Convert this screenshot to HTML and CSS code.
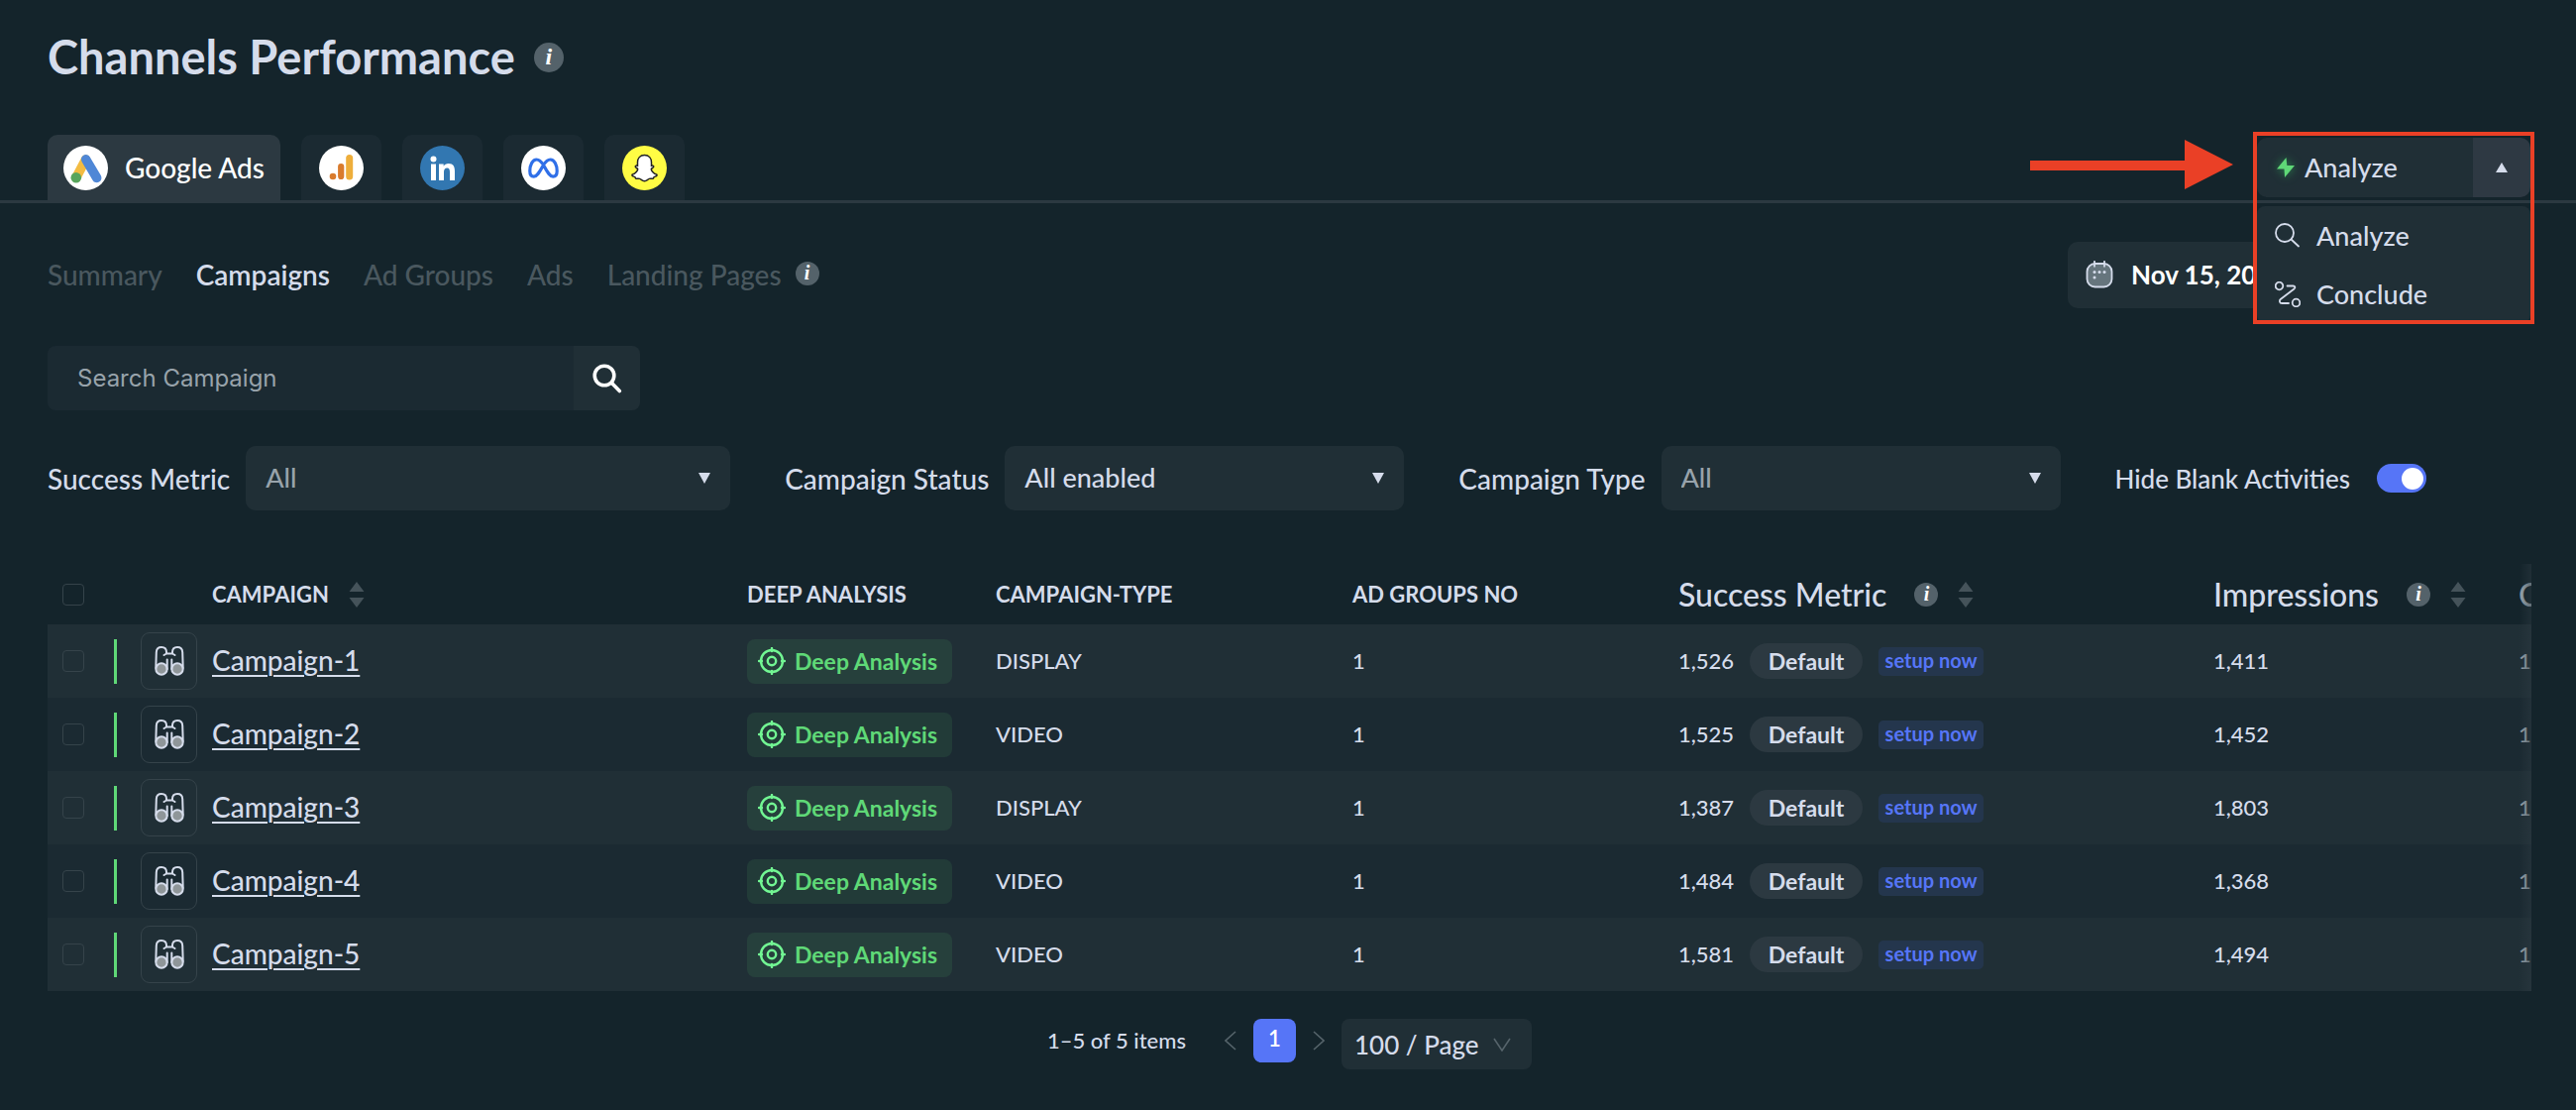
FILE: index.html
```html
<!DOCTYPE html>
<html lang="en">
<head>
<meta charset="utf-8">
<meta name="viewport" content="width=device-width, initial-scale=1">
<title>Channels Performance</title>
<link rel="stylesheet" href="styles.css">
</head>
<body>
<svg class="sprite" aria-hidden="true">
  <symbol id="i-binoculars" viewBox="0 0 30 30">
    <g fill="none" stroke="#d5dceb" stroke-width="2" stroke-linecap="round" stroke-linejoin="round">
      <circle cx="7" cy="23" r="5.700" fill="#8f9699"/>
      <circle cx="23" cy="23" r="5.700" fill="#8f9699"/>
      <path d="M1.300 22 1.800 6C2 2.500 4.300 1 7 1c3.200 0 5 2 5 5v1.500h6V6c0-3 1.800-5 5-5 2.700 0 5 1.500 5.200 5l.5 16M12.700 13.500V23M17.300 13.500V23M12 7.500 9.500 9M18 7.500 20.500 9"/>
    </g>
  </symbol>
  <symbol id="i-target" viewBox="0 0 28 28">
    <g fill="none" stroke="#72f693" stroke-width="2.400" stroke-linecap="round">
      <circle cx="14" cy="14" r="11"/><circle cx="14" cy="14" r="4.200"/>
      <path d="M14 1v3M14 24v3M1 14h3M24 14h3"/>
    </g>
  </symbol>
  <symbol id="i-sort" viewBox="0 0 16 26">
    <path d="M8 0 15.500 10H.5zM8 26 .5 16h15z" fill="#45535a"/>
  </symbol>
  <symbol id="i-down" viewBox="0 0 12 11"><path d="M0 0h12L6 11z" fill="#d5dceb"/></symbol>
</svg>

<header class="page-head">
  <h1>Channels Performance</h1>
  <span class="info info-lg">i</span>
</header>

<div class="channel-bar">
  <nav class="channels">
    <button class="channel active" type="button">
      <svg class="logo" viewBox="0 0 45 45" aria-hidden="true"><circle cx="22.500" cy="22.500" r="22.500" fill="#fff"/><path d="M22.500 14 13 32" stroke="#f3bc42" stroke-width="9.500" stroke-linecap="round"/><path d="M22.700 13.800 33.700 32.500" stroke="#4f87d6" stroke-width="9.500" stroke-linecap="round"/><circle cx="12.800" cy="32.300" r="5.300" fill="#58a55c"/></svg>
      Google Ads
    </button>
    <button class="channel" type="button" aria-label="Google Analytics">
      <svg class="logo" viewBox="0 0 45 45"><circle cx="22.500" cy="22.500" r="22.500" fill="#fff"/><path d="M30.700 12.500v18.500" stroke="#eeae3b" stroke-width="7" stroke-linecap="round"/><path d="M22.200 21.200v9.800" stroke="#d97b2d" stroke-width="6.200" stroke-linecap="round"/><circle cx="14" cy="31" r="3.300" fill="#d97b2d"/></svg>
    </button>
    <button class="channel" type="button" aria-label="LinkedIn">
      <svg class="logo" viewBox="0 0 45 45"><circle cx="22.500" cy="22.500" r="22.500" fill="#3277b1"/><g fill="#fff"><circle cx="13.500" cy="13.500" r="3"/><path d="M11 18.500h5V35h-5zM19 18.500h4.700v2.300c1-1.700 2.800-2.700 5-2.700 4.800 0 6.300 3 6.300 7.700V35h-5v-8.300c0-2.500-.5-4.200-2.700-4.200-2.400 0-3.300 1.700-3.300 4.200V35h-5z"/></g></svg>
    </button>
    <button class="channel" type="button" aria-label="Meta">
      <svg class="logo" viewBox="0 0 45 45"><circle cx="22.500" cy="22.500" r="22.500" fill="#fff"/><path d="M22.500 19.500C20 15.500 18 14 15.500 14 11.500 14 8.800 19.500 8.800 25.500c0 3.700 1.500 5.700 4 5.700 3 0 5-3.200 9.700-11.700C25 15.500 27 14 29.500 14c4 0 6.700 5.500 6.700 11.500 0 3.700-1.500 5.700-4 5.700-3 0-5-3.200-9.700-11.700z" fill="none" stroke="#2f6fe8" stroke-width="3.200"/></svg>
    </button>
    <button class="channel" type="button" aria-label="Snapchat">
      <svg class="logo" viewBox="0 0 45 45"><circle cx="22.500" cy="22.500" r="22.500" fill="#fffc44"/><path d="M22.500 9.500c4.600 0 7 3.300 7 7.300v3.400c1-.4 2.300-.1 2.300.9 0 1.200-2.300 1.500-2.500 2.600-.1 1.300 2.200 4.600 5.200 5.300.9.300.7 1.300-.2 1.700-1 .5-2.100.5-2.400 1.200-.3.600 0 1.300-.9 1.400-1.200.1-2.300-.4-3.700.1-1.600.6-2.400 2.300-4.800 2.300s-3.200-1.700-4.800-2.300c-1.400-.5-2.500 0-3.700-.1-.9-.1-.6-.8-.9-1.400-.3-.7-1.400-.7-2.400-1.200-.9-.4-1.100-1.400-.2-1.700 3-.7 5.300-4 5.200-5.300-.2-1.100-2.500-1.400-2.500-2.600 0-1 1.300-1.300 2.300-.9v-3.400c0-4 2.400-7.300 7-7.300z" fill="#fff" stroke="#222" stroke-width="1.500"/></svg>
    </button>
  </nav>

  <div class="action">
    <button class="action-main" type="button">
      <svg class="bolt" viewBox="0 0 18 20" aria-hidden="true"><path d="M9.500 0 0 11.500h7.500L8 20l10-12h-7.700z" fill="#5fd877"/></svg>
      Analyze
    </button>
    <button class="action-toggle" type="button" aria-label="Close menu" aria-expanded="true">
      <svg width="12" height="10" viewBox="0 0 12 10"><path d="M6 0l6 10H0z" fill="#d5dceb"/></svg>
    </button>
    <div class="action-menu" role="menu">
      <button type="button" role="menuitem">
        <svg viewBox="0 0 26 26" aria-hidden="true"><g fill="none" stroke="#d5dceb" stroke-width="1.800" stroke-linecap="round"><circle cx="10" cy="10" r="9"/><path d="M16.500 16.500l7.500 7"/></g></svg>
        Analyze
      </button>
      <button type="button" role="menuitem">
        <svg viewBox="0 0 26 26" aria-hidden="true"><g fill="none" stroke="#d5dceb" stroke-width="1.800" stroke-linecap="round" stroke-linejoin="round"><circle cx="4.500" cy="4.500" r="3.800"/><circle cx="21.500" cy="21.500" r="3.800"/><path d="M12.500 4.500h6c2 0 2.500 2 1 3L5.700 18c-1.500 1.200-1 4 1.500 4H14"/></g></svg>
        Conclude
      </button>
    </div>
    <div class="highlight"></div>
    <svg class="arrow" viewBox="0 0 205 50" aria-hidden="true"><path d="M0 21h156V0l49 25-49 25V31H0z" fill="#ea4026"/></svg>
  </div>
</div>

<main>
  <div class="subnav-row">
    <nav class="subnav">
      <a href="#">Summary</a>
      <a href="#" class="active">Campaigns</a>
      <a href="#">Ad Groups</a>
      <a href="#">Ads</a>
      <a href="#">Landing Pages</a>
    </nav>
    <span class="info">i</span>
    <button class="date" type="button">
      <svg viewBox="0 0 28 28" aria-hidden="true"><rect x="1.500" y="3" width="25" height="23.500" rx="8" fill="#66757d" stroke="#d5dceb" stroke-width="1.800"/><path d="M9 .8v5M19 .8v5" stroke="#d5dceb" stroke-width="1.800" stroke-linecap="round"/><g fill="#d5dceb"><circle cx="9" cy="11.500" r="1.500"/><circle cx="14" cy="11.500" r="1.500"/><circle cx="19" cy="11.500" r="1.500"/><circle cx="9" cy="17" r="1.500"/></g></svg>
      Nov 15, 20
    </button>
  </div>

  <form class="search">
    <input type="text" placeholder="Search Campaign" aria-label="Search Campaign">
    <button type="button" aria-label="Search">
      <svg viewBox="0 0 30 30"><g fill="none" stroke="#fff" stroke-width="3.600" stroke-linecap="round"><circle cx="12" cy="12" r="9.800"/><path d="M19.500 19.500l7.800 8"/></g></svg>
    </button>
  </form>

  <div class="filters">
    <div class="field">
      <label for="metric">Success Metric</label>
      <div class="select wide muted"><select id="metric"><option>All</option></select><svg><use href="#i-down"/></svg></div>
    </div>
    <div class="field">
      <label for="status">Campaign Status</label>
      <div class="select"><select id="status"><option>All enabled</option></select><svg><use href="#i-down"/></svg></div>
    </div>
    <div class="field">
      <label for="type">Campaign Type</label>
      <div class="select muted"><select id="type"><option>All</option></select><svg><use href="#i-down"/></svg></div>
    </div>
    <div class="field toggle-field">
      <label for="blank">Hide Blank Activities</label>
      <input class="switch" type="checkbox" role="switch" id="blank" checked>
    </div>
  </div>

  <div class="table-wrap">
    <table>
      <colgroup><col class="c-check"><col class="c-tools"><col class="c-name"><col class="c-deep"><col class="c-type"><col class="c-groups"><col class="c-metric"><col class="c-impr"><col class="c-last"></colgroup>
      <thead>
        <tr>
          <th class="check"><input type="checkbox" aria-label="Select all"></th>
          <th></th>
          <th><div class="head">CAMPAIGN<svg class="sort"><use href="#i-sort"/></svg></div></th>
          <th>DEEP ANALYSIS</th>
          <th>CAMPAIGN-TYPE</th>
          <th>AD GROUPS NO</th>
          <th><div class="head metric">Success Metric<span class="info">i</span><svg class="sort"><use href="#i-sort"/></svg></div></th>
          <th><div class="head metric">Impressions<span class="info">i</span><svg class="sort"><use href="#i-sort"/></svg></div></th>
          <th class="faded"><div class="head metric">C</div></th>
        </tr>
      </thead>
      <tbody>
        <tr>
          <td class="check"><input type="checkbox" aria-label="Select Campaign-1"></td>
          <td class="tools"><div><i class="bar"></i><button class="view" type="button" aria-label="View Campaign-1"><svg><use href="#i-binoculars"/></svg></button></div></td>
          <td><a class="name" href="#">Campaign-1</a></td>
          <td><button class="deep" type="button"><svg><use href="#i-target"/></svg>Deep Analysis</button></td>
          <td>DISPLAY</td><td>1</td>
          <td><div class="value">1,526<span class="pill">Default</span><a class="setup" href="#">setup now</a></div></td>
          <td>1,411</td><td class="faded">1,</td>
        </tr>
        <tr>
          <td class="check"><input type="checkbox" aria-label="Select Campaign-2"></td>
          <td class="tools"><div><i class="bar"></i><button class="view" type="button" aria-label="View Campaign-2"><svg><use href="#i-binoculars"/></svg></button></div></td>
          <td><a class="name" href="#">Campaign-2</a></td>
          <td><button class="deep" type="button"><svg><use href="#i-target"/></svg>Deep Analysis</button></td>
          <td>VIDEO</td><td>1</td>
          <td><div class="value">1,525<span class="pill">Default</span><a class="setup" href="#">setup now</a></div></td>
          <td>1,452</td><td class="faded">1,</td>
        </tr>
        <tr>
          <td class="check"><input type="checkbox" aria-label="Select Campaign-3"></td>
          <td class="tools"><div><i class="bar"></i><button class="view" type="button" aria-label="View Campaign-3"><svg><use href="#i-binoculars"/></svg></button></div></td>
          <td><a class="name" href="#">Campaign-3</a></td>
          <td><button class="deep" type="button"><svg><use href="#i-target"/></svg>Deep Analysis</button></td>
          <td>DISPLAY</td><td>1</td>
          <td><div class="value">1,387<span class="pill">Default</span><a class="setup" href="#">setup now</a></div></td>
          <td>1,803</td><td class="faded">1,</td>
        </tr>
        <tr>
          <td class="check"><input type="checkbox" aria-label="Select Campaign-4"></td>
          <td class="tools"><div><i class="bar"></i><button class="view" type="button" aria-label="View Campaign-4"><svg><use href="#i-binoculars"/></svg></button></div></td>
          <td><a class="name" href="#">Campaign-4</a></td>
          <td><button class="deep" type="button"><svg><use href="#i-target"/></svg>Deep Analysis</button></td>
          <td>VIDEO</td><td>1</td>
          <td><div class="value">1,484<span class="pill">Default</span><a class="setup" href="#">setup now</a></div></td>
          <td>1,368</td><td class="faded">1,</td>
        </tr>
        <tr>
          <td class="check"><input type="checkbox" aria-label="Select Campaign-5"></td>
          <td class="tools"><div><i class="bar"></i><button class="view" type="button" aria-label="View Campaign-5"><svg><use href="#i-binoculars"/></svg></button></div></td>
          <td><a class="name" href="#">Campaign-5</a></td>
          <td><button class="deep" type="button"><svg><use href="#i-target"/></svg>Deep Analysis</button></td>
          <td>VIDEO</td><td>1</td>
          <td><div class="value">1,581<span class="pill">Default</span><a class="setup" href="#">setup now</a></div></td>
          <td>1,494</td><td class="faded">1,</td>
        </tr>
      </tbody>
    </table>
  </div>

  <div class="pagination">
    <span class="count">1–5 of 5 items</span>
    <button class="step" type="button" aria-label="Previous page"><svg viewBox="0 0 12 20"><path d="M11 1 1 10l10 9" fill="none" stroke="#56646b" stroke-width="1.600"/></svg></button>
    <button class="page" type="button" aria-current="page">1</button>
    <button class="step" type="button" aria-label="Next page"><svg viewBox="0 0 12 20"><path d="M1 1l10 9-10 9" fill="none" stroke="#56646b" stroke-width="1.600"/></svg></button>
    <div class="per-page"><select aria-label="Items per page"><option>100 / Page</option></select><svg viewBox="0 0 18 14"><path d="M1 1l8 12 8-12" fill="none" stroke="#56646b" stroke-width="1.600"/></svg></div>
  </div>
</main>
</body>
</html>
```
FILE: styles.css
```css
:root {
  --bg: #14242b;
  --panel: #202f36;
  --panel-dark: #1b2a32;
  --line: #2c3941;
  --text: #d5dceb;
  --muted: #98a3ab;
  --dim: #4a585f;
  --green: #5fd877;
  --blue: #5675f7;
  --red: #ea4026;
}

* { box-sizing: border-box; }

body {
  margin: 0;
  background: var(--bg);
  color: var(--text);
  font: 500 28px/32px Lato, "Noto Sans", sans-serif;
}

button, select, input { font: inherit; color: inherit; margin: 0; border: 0; padding: 0; }
button { background: none; cursor: pointer; white-space: nowrap; }
a { color: inherit; text-decoration: none; }
svg { display: block; flex: none; }
.sprite { position: absolute; width: 0; height: 0; }

.info {
  flex: none;
  width: 24px;
  height: 24px;
  border-radius: 50%;
  background: #54626a;
  color: #fff;
  font: italic bold 20px/23px "Liberation Serif", serif;
  text-align: center;
}
.info-lg { width: 30px; height: 30px; font-size: 24px; line-height: 29px; }

/* Title */
.page-head { display: flex; align-items: center; gap: 19px; padding: 30px 48px 50px; }
h1 { margin: 0; font-size: 47px; line-height: 54px; padding-bottom: 2px; font-weight: 700; }

/* Channel tabs */
.channel-bar {
  display: flex;
  justify-content: space-between;
  align-items: flex-start;
  padding: 0 46px 0 48px;
  border-bottom: 3px solid var(--line);
}
.channels { display: flex; gap: 21px; }
.channel {
  display: flex;
  align-items: center;
  gap: 17px;
  height: 66px;
  padding: 0 18px;
  border-radius: 10px 10px 0 0;
  background: var(--panel-dark);
  color: #fff;
}
.channel.active { padding: 0 16px; background: var(--line); }
.logo { width: 45px; height: 45px; }

/* Action drop-down */
.action { position: relative; z-index: 2; display: flex; width: 276px; height: 60px; margin-top: 3px; font-size: 27px; }
.action-main {
  display: flex;
  flex: 1;
  align-items: center;
  gap: 10px;
  padding-left: 20px;
  border-radius: 10px 0 0 10px;
  background: var(--panel);
}
.bolt { width: 18px; height: 20px; filter: drop-shadow(0 0 5px #2c8a50); }
.action-toggle {
  display: grid;
  place-items: center;
  width: 58px;
  border-radius: 0 10px 10px 0;
  background: #2e3943;
}
.action-menu {
  position: absolute;
  top: 69px;
  left: 0;
  width: 100%;
  border-radius: 8px;
  background: var(--panel);
}
.action-menu button { display: flex; align-items: center; gap: 16px; width: 100%; height: 59px; padding: 0 0 0 18px; }
.action-menu svg { width: 26px; height: 26px; }
.highlight { position: absolute; inset: -6px -4px auto; height: 194px; border: 4px solid var(--red); pointer-events: none; }
.arrow { position: absolute; top: 2px; right: calc(100% + 24px); width: 205px; height: 50px; }

main { padding: 39px 45px 40px 48px; }

/* Sub navigation and date */
.subnav-row { display: flex; align-items: center; }
.subnav { display: flex; gap: 34px; padding-bottom: 2px; color: var(--dim); }
.subnav .active { color: var(--text); font-weight: 600; }
.subnav-row .info { margin: -4px auto 0 14px; }
.date {
  display: flex;
  align-items: center;
  gap: 18px;
  width: 468px;
  height: 67px;
  padding: 0 0 2px 18px;
  border-radius: 10px;
  background: var(--panel);
  color: #fff;
  font-weight: 700;
  font-size: 26px;
}
.date svg { width: 28px; height: 28px; }

/* Search */
.search { display: flex; width: 598px; height: 65px; margin-top: 38px; }
.search input {
  flex: 1;
  min-width: 0;
  padding-left: 30px;
  border-radius: 8px 0 0 8px;
  background: var(--panel-dark);
  font: 24px Inter, sans-serif;
}
.search input::placeholder { color: var(--muted); opacity: 1; }
.search button { display: grid; place-items: center; width: 67px; border-radius: 0 8px 8px 0; background: var(--panel); }
.search svg { width: 30px; height: 30px; }

/* Filters */
.filters { display: flex; gap: 55px; margin-top: 36px; }
.field { display: flex; align-items: center; gap: 16px; white-space: nowrap; }
.toggle-field { gap: 27px; font-size: 26px; }
.select { display: grid; align-items: center; width: 403px; }
.select.wide { width: 489px; }
.select.muted { color: var(--muted); }
.select > *, .per-page > * { grid-area: 1 / 1; }
select { appearance: none; width: 100%; border-radius: 10px; background: var(--panel); }
.select select { height: 65px; padding: 0 0 2px 20px; font-size: 27px; }
.select svg { justify-self: end; width: 12px; height: 11px; margin: 0 20px 0 0; pointer-events: none; }

.switch {
  display: flex;
  align-items: center;
  justify-content: flex-end;
  appearance: none;
  width: 50px;
  height: 29px;
  padding-right: 3px;
  border-radius: 15px;
  background: var(--blue);
}
.switch::before { content: ""; width: 22px; height: 22px; border-radius: 50%; background: #fff; }

/* Table */
.table-wrap { position: relative; overflow: hidden; margin-top: 54px; }
.table-wrap::after {
  content: "";
  position: absolute;
  inset: 0 0 0 auto;
  width: 12px;
  background: linear-gradient(to right, transparent, rgba(44, 57, 65, .5));
}
table { width: 2826px; table-layout: fixed; border-collapse: collapse; font-size: 22px; }
.c-check { width: 50px; }
.c-tools { width: 108px; }
.c-name { width: 540px; }
.c-deep { width: 251px; }
.c-type { width: 360px; }
.c-groups { width: 329px; }
.c-metric { width: 540px; }
.c-impr { width: 308px; }
.c-last { width: 340px; }
th, td { padding: 0 0 0 8px; text-align: left; vertical-align: middle; white-space: nowrap; }
th { height: 61px; font-weight: 700; }
td { height: 74px; }
tbody tr:nth-child(odd) { background: var(--panel); }
tbody tr:nth-child(even) { background: var(--panel-dark); }
.check { padding-left: 15px; }
.check input { display: block; appearance: none; width: 22px; height: 22px; border: 1px solid #35434a; border-radius: 4px; }
.head { display: flex; align-items: center; gap: 20px; }
.head.metric { font-size: 32px; font-weight: 500; }
.head .info { margin-left: 8px; }
.sort { width: 16px; height: 26px; }
.faded { color: var(--muted); }

.tools { padding-left: 17px; }
.tools div { display: flex; align-items: center; gap: 24px; }
.bar { width: 3px; height: 45px; background: var(--green); }
.view { display: grid; place-items: center; width: 57px; height: 58px; border: 1px solid #35434a; border-radius: 9px; }
.view svg { width: 30px; height: 30px; }
.name {
  font-size: 28px;
  text-decoration: underline;
  text-decoration-thickness: 2px;
  text-underline-offset: 4px;
}
.deep {
  display: flex;
  align-items: center;
  gap: 9px;
  width: 207px;
  height: 45px;
  padding-left: 11px;
  border-radius: 8px;
  background: rgba(95, 216, 119, .1);
  color: var(--green);
  font-size: 23px;
  font-weight: 700;
}
.deep svg { width: 28px; height: 28px; }
.value { display: flex; align-items: center; gap: 16px; }
.pill {
  width: 114px;
  height: 36px;
  border-radius: 18px;
  background: var(--line);
  font-size: 23px;
  font-weight: 700;
  line-height: 36px;
  text-align: center;
}
.setup {
  width: 106px;
  height: 29px;
  border-radius: 5px;
  background: #24364d;
  color: var(--blue);
  font-size: 20px;
  font-weight: 700;
  line-height: 26px;
  text-align: center;
}

/* Pagination */
.pagination { display: flex; justify-content: center; align-items: flex-start; gap: 17px; margin-top: 28px; font-size: 22px; }
.count { margin-right: 22px; line-height: 44px; }
.step { display: grid; place-items: center; height: 44px; }
.step svg { width: 12px; height: 20px; }
.page { width: 43px; height: 44px; border-radius: 8px; background: var(--blue); color: #fff; font-weight: 600; line-height: 40px; padding-bottom: 4px; }
.per-page { display: grid; align-items: center; width: 192px; }
.per-page select { height: 51px; padding-left: 13px; border-radius: 8px; font-size: 26px; }
.per-page svg { justify-self: end; width: 18px; height: 14px; margin-right: 21px; pointer-events: none; }
```
